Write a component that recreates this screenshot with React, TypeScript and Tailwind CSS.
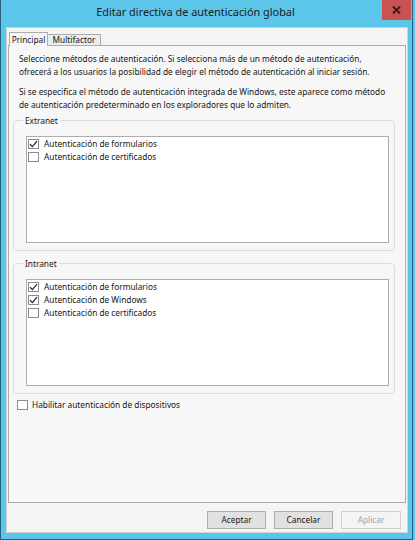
import React from "react";

const font = { fontFamily: '"Noto Sans", "Liberation Sans", sans-serif' };

function Check({ checked }: { checked: boolean }) {
  return (
    <span className="w-[11px] h-[10px] border border-[#8c8c8c] bg-white flex items-center justify-center shrink-0">
      {checked && (
        <svg width="9" height="8" viewBox="0 0 9 8">
          <path d="M1 4.2 L3.4 6.6 L8 1.2" fill="none" stroke="#2a2a2a" strokeWidth="1.3" />
        </svg>
      )}
    </span>
  );
}

function Row({ checked, label }: { checked: boolean; label: string }) {
  return (
    <div className="flex items-center h-[13px] pl-[1px] gap-[5px]">
      <Check checked={checked} />
      <span className="text-[8.3px] leading-[13px] text-[#161616] whitespace-nowrap">{label}</span>
    </div>
  );
}

function Group({ title, rows, className }: { title: string; rows: { c: boolean; l: string }[]; className?: string }) {
  return (
    <fieldset className={"w-[382px] ml-[4px] border border-[#dcdcdc] rounded-[4px] pb-[7px] " + (className || "")}>
      <legend className="ml-[9px] px-[2px] text-[8.3px] leading-[13px] text-[#161616]">{title}</legend>
      <div className="ml-[12px] mt-[9px] w-[363px] h-[107px] bg-white border border-[#adadad]">
        {rows.map((r) => (
          <Row key={r.l} checked={r.c} label={r.l} />
        ))}
      </div>
    </fieldset>
  );
}

export default function App() {
  return (
    <div className="w-[415px] h-[540px] flex bg-[#5bc6ea] overflow-hidden" style={font}>
      <div className="w-[413px] h-full border-l border-b border-r border-[#27607f] flex flex-col">
        <div className="h-[27px] flex items-start shrink-0">
          <div className="flex-1 h-[25px] flex items-center justify-center pl-[8px] text-[10.9px] text-[#1b1b1b]">
            Editar directiva de autenticación global
          </div>
          <div className="w-[29px] h-[20px] bg-[#c95353] flex items-center justify-center mr-[1px]">
            <svg width="9" height="8" viewBox="0 0 9 8">
              <path d="M1 0.5 L8 7.5 M8 0.5 L1 7.5" stroke="#3b1c1c" strokeWidth="2" />
            </svg>
          </div>
        </div>
        <div className="ml-[5px] w-[402px] h-[506px] bg-[#f4f4f4] border border-[#d3d3d3] flex flex-col shrink-0">
          <div className="flex items-end h-[14px] mt-[4px] ml-[2px] -mb-px relative z-10">
            <div className="w-[39px] h-[14px] border-l border-t border-r border-[#acacac] bg-[#f7f7f7] text-[8.3px] leading-[11px] text-[#161616] text-center pt-[1px]">
              Principal
            </div>
            <div className="w-[53px] h-[11px] mb-[1px] border-t border-r border-[#acacac] bg-[#ececec] text-[8.3px] leading-[10px] text-[#161616] text-center">
              Multifactor
            </div>
          </div>
          <div className="ml-[1px] w-[398px] h-[458px] border border-[#acacac] bg-[#f7f7f7] flex flex-col shrink-0">
            <div className="pl-[10px] pt-[6px] text-[8.3px] leading-[13px] text-[#161616] whitespace-nowrap">
              <p>Seleccione métodos de autenticación. Si selecciona más de un método de autenticación,</p>
              <p>ofrecerá a los usuarios la posibilidad de elegir el método de autenticación al iniciar sesión.</p>
              <p className="mt-[7px]">Si se especifica el método de autenticación integrada de Windows, este aparece como método</p>
              <p>de autenticación predeterminado en los exploradores que lo admiten.</p>
            </div>
            <Group
              className="mt-[3px]"
              title="Extranet"
              rows={[
                { c: true, l: "Autenticación de formularios" },
                { c: false, l: "Autenticación de certificados" },
              ]}
            />
            <Group
              className="mt-[6px]"
              title="Intranet"
              rows={[
                { c: true, l: "Autenticación de formularios" },
                { c: true, l: "Autenticación de Windows" },
                { c: false, l: "Autenticación de certificados" },
              ]}
            />
            <div className="flex items-center h-[13px] mt-[4px] ml-[8px] gap-[4px]">
              <Check checked={false} />
              <span className="text-[8.3px] leading-[13px] text-[#161616]">Habilitar autenticación de dispositivos</span>
            </div>
          </div>
          <div className="flex justify-end gap-[8px] mt-[8px] pr-[6px]">
            <button className="w-[59px] h-[18px] bg-[#e1e1e1] border border-[#adadad] text-[8.3px] text-[#161616]">Aceptar</button>
            <button className="w-[59px] h-[18px] bg-[#e1e1e1] border border-[#adadad] text-[8.3px] text-[#161616]">Cancelar</button>
            <button className="w-[60px] h-[18px] bg-[#f4f4f4] border border-[#cfcfcf] text-[8.3px] text-[#a3a3a3]">Aplicar</button>
          </div>
        </div>
      </div>
      <div className="w-[2px] h-full bg-[#5bc6ea]" />
    </div>
  );
}
